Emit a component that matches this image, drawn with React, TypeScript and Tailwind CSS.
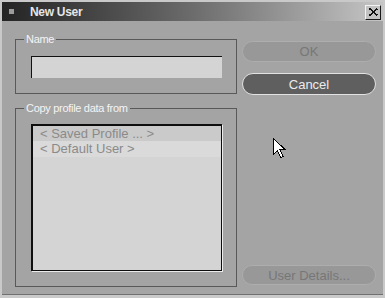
export default function App() {
  return (
    <div
      className="relative h-[298px] w-[385px] overflow-hidden bg-[#c9c9c9] pl-[2px] pr-[2px] pt-[2px]"
      style={{ fontFamily: '"Liberation Sans", Arial, sans-serif' }}
    >
      {/* Title bar */}
      <div className="flex h-[19px] items-center bg-gradient-to-r from-[#242424] via-[#6c6c6c] to-[#c6c6c6]">
        <div className="ml-[7px] h-[5px] w-[5px] bg-[#9c9c9c]" />
        <span className="ml-[16px] text-[12px] font-bold leading-none tracking-[-0.3px] text-[#e6e6e6]">
          New User
        </span>
        <button className="ml-auto mr-[2px] mt-[1px] flex h-[15px] w-[16px] items-center justify-center border border-b-[#1a1a1a] border-l-[#f2f2f2] border-r-[#1a1a1a] border-t-[#f2f2f2] bg-[#c2c2c2]">
          <svg width="9" height="8" viewBox="0 0 9 8" shapeRendering="crispEdges">
            <path d="M0.5 0.5 L8.5 7.5 M8.5 0.5 L0.5 7.5" stroke="#111" strokeWidth="1.6" />
          </svg>
        </button>
      </div>

      {/* Body */}
      <div className="flex h-[274px] border-b border-[#707070] bg-[#a4a4a4] pl-[13px] pr-[7px]">
        {/* Left column */}
        <div className="flex w-[222px] flex-col">
          <div className="relative mt-[18px] h-[55px] w-[222px] border border-[#595959]">
            <span className="absolute -top-[7px] left-[8px] bg-[#a4a4a4] px-[2px] text-[11px] leading-[12px] tracking-[-0.3px] text-[#f4f4f4]">
              Name
            </span>
            <div className="ml-[15px] mt-[16px] h-[22px] w-[191px] border-l border-t border-[#111] bg-[#d4d4d4]" />
          </div>

          <div className="relative mt-[14px] h-[179px] w-[222px] border border-[#595959]">
            <span className="absolute -top-[7px] left-[8px] bg-[#a4a4a4] px-[2px] text-[11px] leading-[12px] tracking-[-0.3px] text-[#f4f4f4]">
              Copy profile data from
            </span>
            <div className="ml-[15px] mt-[15px] h-[147px] w-[191px] border-b border-l-2 border-r border-t-2 border-[#0e0e0e] bg-[#d4d4d4] shadow-[1px_1px_0_#ececec]">
              <div className="h-[15px] bg-[#cacaca] pl-[7px] text-[13px] leading-[15px] text-[#8a8a8a]">
                &lt; Saved Profile ... &gt;
              </div>
              <div className="h-[16px] bg-[#dadada] pl-[7px] text-[13px] leading-[16px] text-[#8a8a8a]">
                &lt; Default User &gt;
              </div>
            </div>
          </div>
        </div>

        {/* Right column */}
        <div className="ml-[5px] flex w-[134px] flex-col">
          <button className="mt-[20px] h-[21px] w-[134px] rounded-full border border-[#adadad] bg-[#989898] text-[13px] leading-none text-[#777777]">
            OK
          </button>
          <button className="mt-[11px] h-[22px] w-[134px] rounded-full border-[1.5px] border-[#e2e2e2] bg-[#5f5f5f] text-[13px] leading-none text-[#ececec]">
            Cancel
          </button>
          <button className="mb-[9px] mt-auto h-[20px] w-[134px] rounded-full border border-[#adadad] bg-[#989898] text-[13px] leading-none text-[#777777]">
            User Details...
          </button>
        </div>
      </div>

      {/* Mouse pointer */}
      <svg
        className="absolute left-[273px] top-[138px]"
        width="13"
        height="21"
        viewBox="0 0 13 21"
        shapeRendering="crispEdges"
      >
        <path
          d="M0.5 0.5 L0.5 16.5 L4.5 12.5 L7.5 19.5 L10 18.5 L7 11.5 L12 11.5 Z"
          fill="#fff"
          stroke="#000"
          strokeWidth="1"
        />
      </svg>
    </div>
  )
}
